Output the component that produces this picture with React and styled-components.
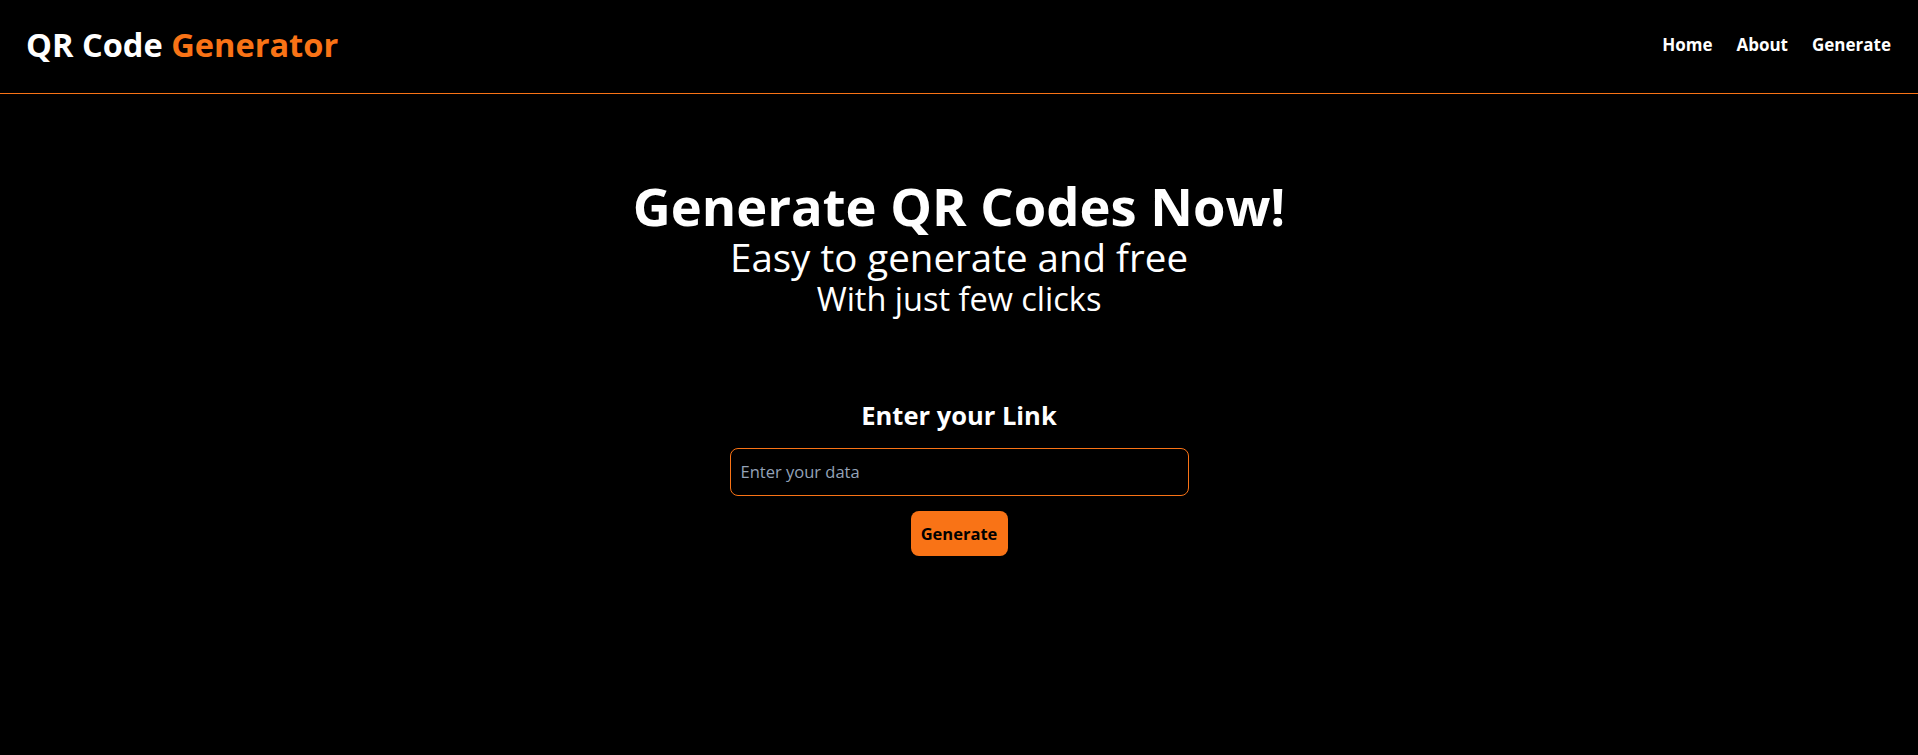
import React from 'react';
import styled, { createGlobalStyle } from 'styled-components';

const orange = '#f97316';

const GlobalStyle = createGlobalStyle`
  html, body {
    margin: 0;
    padding: 0;
    background: #000;
    color: #fff;
    font-family: "Open Sans", "Noto Sans", sans-serif;
  }
`;

const Page = styled.div`
  min-height: 100vh;
  background: #000;
`;

const Header = styled.header`
  height: 94px;
  box-sizing: border-box;
  display: flex;
  align-items: center;
  justify-content: space-between;
  padding: 0 27px 0 26px;
  border-bottom: 1px solid ${orange};
`;

const Logo = styled.div`
  font-size: 32.6px;
  font-weight: 700;
  line-height: 1;
  margin-top: -2px;
  span {
    color: ${orange};
  }
`;

const Nav = styled.nav`
  display: flex;
  gap: 24px;
  margin-top: -4px;
`;

const NavLink = styled.a`
  color: #fff;
  text-decoration: none;
  font-size: 17px;
  font-weight: 700;
  cursor: pointer;
`;

const Hero = styled.section`
  display: flex;
  flex-direction: column;
  align-items: center;
  padding-top: 86px;
`;

const Title = styled.h1`
  margin: 0;
  font-size: 52.5px;
  font-weight: 700;
  line-height: 52px;
`;

const SubTitle = styled.p`
  margin: ${p => p.$gap}px 0 0;
  font-size: ${p => p.$size}px;
  font-weight: 400;
  line-height: 1;
`;

const Form = styled.form`
  display: flex;
  flex-direction: column;
  align-items: center;
  margin-top: 88px;
`;

const Label = styled.label`
  font-size: 25.5px;
  font-weight: 700;
  line-height: 1;
`;

const Input = styled.input`
  margin-top: 19px;
  width: 459px;
  height: 48px;
  box-sizing: border-box;
  padding: 0 10px;
  background: #000;
  border: 1px solid ${orange};
  border-radius: 8px;
  color: #fff;
  font-family: inherit;
  font-size: 16.5px;
  outline: none;
  &::placeholder {
    color: #94a3b8;
  }
`;

const Button = styled.button`
  margin-top: 15px;
  width: 97px;
  height: 45px;
  border: none;
  border-radius: 8px;
  background: ${orange};
  color: #000;
  font-family: inherit;
  font-size: 16.5px;
  font-weight: 700;
  cursor: pointer;
`;

export default function App() {
  return (
    <Page>
      <GlobalStyle />
      <Header>
        <Logo>QR Code <span>Generator</span></Logo>
        <Nav>
          <NavLink>Home</NavLink>
          <NavLink>About</NavLink>
          <NavLink>Generate</NavLink>
        </Nav>
      </Header>
      <Hero>
        <Title>Generate QR Codes Now!</Title>
        <SubTitle $size={38.5} $gap={6}>Easy to generate and free</SubTitle>
        <SubTitle $size={32.5} $gap={6}>With just few clicks</SubTitle>
        <Form onSubmit={e => e.preventDefault()}>
          <Label>Enter your Link</Label>
          <Input type="text" placeholder="Enter your data" />
          <Button type="submit">Generate</Button>
        </Form>
      </Hero>
    </Page>
  );
}
